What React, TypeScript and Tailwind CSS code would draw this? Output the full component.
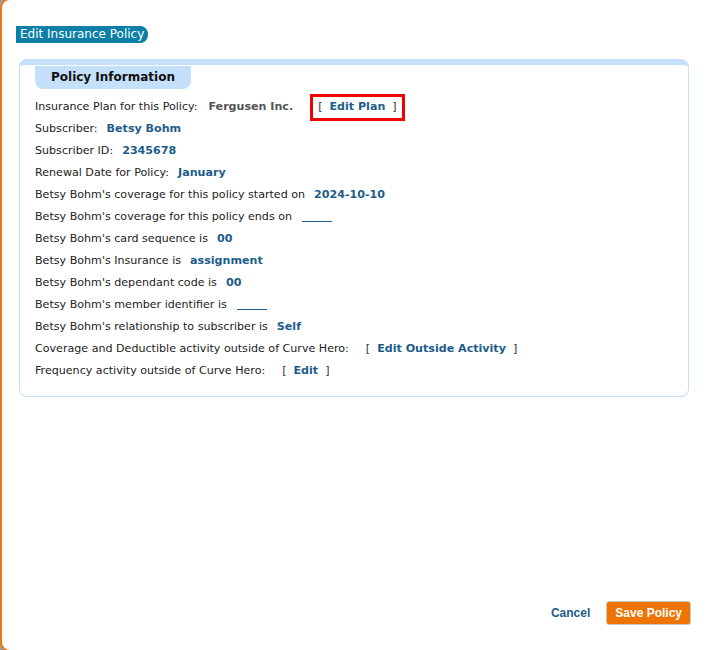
import React from "react";

type Row = {
  label: string;
  value?: string;
  blank?: boolean;
  link?: string;
};

const rows: Row[] = [
  { label: "Subscriber:", value: "Betsy Bohm" },
  { label: "Subscriber ID:", value: "2345678" },
  { label: "Renewal Date for Policy:", value: "January" },
  { label: "Betsy Bohm's coverage for this policy started on", value: "2024-10-10" },
  { label: "Betsy Bohm's coverage for this policy ends on", blank: true },
  { label: "Betsy Bohm's card sequence is", value: "00" },
  { label: "Betsy Bohm's Insurance is", value: "assignment" },
  { label: "Betsy Bohm's dependant code is", value: "00" },
  { label: "Betsy Bohm's member identifier is", blank: true },
  { label: "Betsy Bohm's relationship to subscriber is", value: "Self" },
  { label: "Coverage and Deductible activity outside of Curve Hero:", link: "Edit Outside Activity" },
  { label: "Frequency activity outside of Curve Hero:", link: "Edit" },
];

function Bracket({ text }: { text: string }) {
  return (
    <span className="text-[#333]">
      [<span className="mx-[7px] font-bold text-[#1d5c8a]">{text}</span>]
    </span>
  );
}

export default function App() {
  return (
    <div className="w-[713px] h-[650px] overflow-hidden bg-[#9a9a9a]">
      <div className="w-[730px] h-[654px] -mt-[2px] bg-white border-2 border-[#ec7a12] rounded-[10px] font-['DejaVu_Sans',sans-serif] text-[11.1px] text-[#222] flex flex-col">
        <div className="pt-[26px] pl-[14px]">
          <span className="inline-block bg-[#0b7fa8] text-white text-[12px] leading-[17px] px-[4px] rounded-r-[8px]">
            Edit Insurance Policy
          </span>
        </div>

        <div className="ml-[17px] mt-[15px] w-[670px] border border-[#c4e0fb] border-t-[6px] rounded-[8px] pb-[13px]">
          <div className="ml-[15px] mt-[1px] w-[156px] h-[23px] bg-[#c4e0fb] rounded-b-[8px] flex items-center justify-center font-bold text-[12px] text-[#111]">
            Policy Information
          </div>

          <div className="pl-[15px] mt-[8px] flex flex-col">
            <div className="h-[22px] flex items-center">
              <span>Insurance Plan for this Policy:</span>
              <span className="ml-[11px] font-bold text-[#555]">Fergusen Inc.</span>
              <span className="ml-[17px] border-[3px] border-[#f00000] h-[27px] flex items-center px-[5px]">
                <Bracket text="Edit Plan" />
              </span>
            </div>
            {rows.map((r) => (
              <div key={r.label} className="h-[22px] flex items-center">
                <span>{r.label}</span>
                {r.value && <span className="ml-[9px] font-bold text-[#1d5c8a]">{r.value}</span>}
                {r.blank && <span className="ml-[10px] mt-[8px] w-[30px] h-[1px] bg-[#1d5c8a]" />}
                {r.link && (
                  <span className="ml-[17px]">
                    <Bracket text={r.link} />
                  </span>
                )}
              </div>
            ))}
          </div>
        </div>

        <div className="flex-1" />
        <div className="flex items-center justify-end gap-[16px] pr-[37px] pb-[25px] font-['Liberation_Sans',sans-serif] font-bold text-[12px]">
          <span className="text-[#1d5c8a]">Cancel</span>
          <button className="bg-[#ef7300] text-white px-[8px] h-[24px] rounded-[3px] border border-[#c9c9c9]">
            Save Policy
          </button>
        </div>
      </div>
    </div>
  );
}
